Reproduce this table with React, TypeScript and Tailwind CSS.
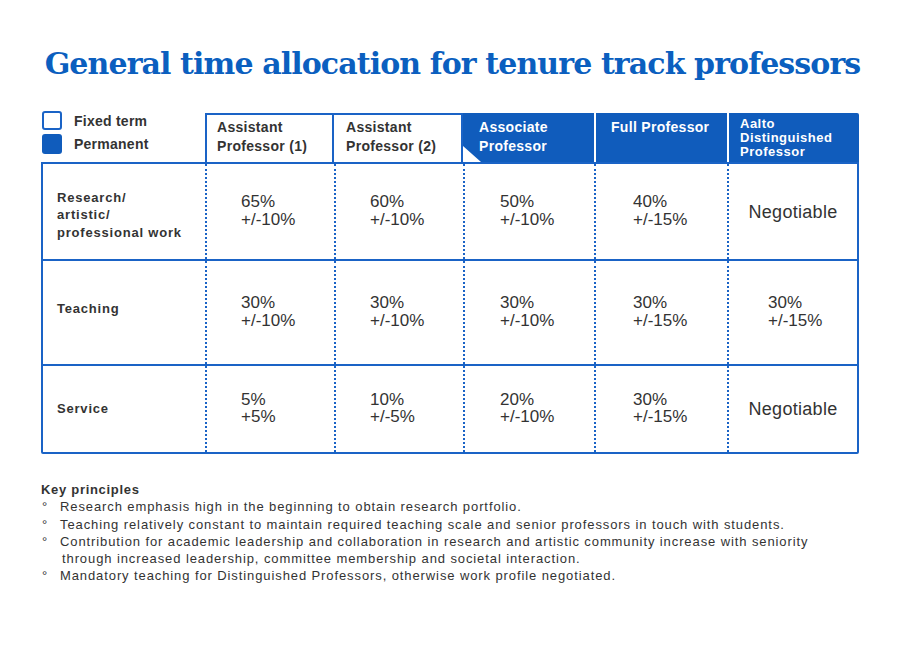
import React from "react";

type Cell = { a?: string; b?: string; neg?: boolean };

const rows: { label: string[]; h: string; labelPad: string; border: boolean; cells: Cell[] }[] = [
  {
    label: ["Research/", "artistic/", "professional work"],
    h: "h-[97px]",
    labelPad: "pt-[7px]",
    border: true,
    cells: [
      { a: "65%", b: "+/-10%" },
      { a: "60%", b: "+/-10%" },
      { a: "50%", b: "+/-10%" },
      { a: "40%", b: "+/-15%" },
      { neg: true },
    ],
  },
  {
    label: ["Teaching"],
    h: "h-[105px]",
    labelPad: "pb-[7px]",
    border: true,
    cells: [
      { a: "30%", b: "+/-10%" },
      { a: "30%", b: "+/-10%" },
      { a: "30%", b: "+/-10%" },
      { a: "30%", b: "+/-15%" },
      { a: "30%", b: "+/-15%" },
    ],
  },
  {
    label: ["Service"],
    h: "h-[86px]",
    labelPad: "",
    border: false,
    cells: [
      { a: "5%", b: "+5%" },
      { a: "10%", b: "+/-5%" },
      { a: "20%", b: "+/-10%" },
      { a: "30%", b: "+/-15%" },
      { neg: true },
    ],
  },
];

const colClasses = [
  "w-[129px] pl-[34px]",
  "w-[129px] pl-[34px]",
  "w-[131px] pl-[35px]",
  "w-[133px] pl-[37px]",
  "w-[130px] pl-[39px]",
];

function DataCell({ cell, idx }: { cell: Cell; idx: number }) {
  if (cell.neg) {
    return (
      <div
        className={`${idx === 4 ? "w-[130px]" : "w-[129px]"} h-full border-l-2 border-dotted border-[#1a63c6] flex items-center justify-center`}
      >
        <span className="text-[18px] leading-[20px] tracking-[0.3px] text-[#333]">Negotiable</span>
      </div>
    );
  }
  return (
    <div className={`${colClasses[idx]} h-full border-l-2 border-dotted border-[#1a63c6] flex items-center pb-[2px]`}>
      <div className="text-[17px] leading-[17.5px] text-[#333]">
        <div>{cell.a}</div>
        <div>{cell.b}</div>
      </div>
    </div>
  );
}

export default function App() {
  return (
    <div className="w-[914px] h-[646px] bg-white relative overflow-hidden pt-[49px] font-['Liberation_Sans',Arial,sans-serif] text-[#333]">
      <h1 className="ml-[41px] w-[823px] text-center whitespace-nowrap text-[30px] leading-[30px] font-bold tracking-[-0.9px] text-[#0b5fbf] font-['DejaVu_Serif',serif]">
        General time allocation for tenure track professors
      </h1>

      <div className="ml-[41px] mt-[32px] w-[818px]">
        {/* header row */}
        <div className="flex h-[51px]">
          <div className="w-[164px] flex flex-col gap-[4px] pl-[1px]">
            <div className="flex items-center h-[19px] gap-[12px]">
              <span className="w-[20px] h-[19px] rounded-[3px] border-2 border-[#1a63c6] box-border" />
              <span className="font-bold text-[14px] leading-[16px] tracking-[0.25px]">Fixed term</span>
            </div>
            <div className="flex items-center h-[20px] gap-[12px]">
              <span className="w-[20px] h-[20px] rounded-[3px] bg-[#105cbc]" />
              <span className="font-bold text-[14px] leading-[16px] tracking-[0.25px]">Permanent</span>
            </div>
          </div>
          <div className="w-[129px] mt-[2px] border-2 border-b-0 border-[#1a63c6] pl-[10px] pt-[3px] font-bold text-[14px] leading-[19px] tracking-[0.3px]">
            <div>Assistant</div>
            <div>Professor (1)</div>
          </div>
          <div className="w-[129px] mt-[2px] border-t-2 border-r-2 border-[#1a63c6] pl-[12px] pt-[3px] font-bold text-[14px] leading-[19px] tracking-[0.3px]">
            <div>Assistant</div>
            <div>Professor (2)</div>
          </div>
          <div className="relative w-[131px] mt-[2px] bg-[#105cbc] pl-[16px] pt-[5px] font-bold text-[14px] leading-[19px] tracking-[0.3px] text-white">
            <div>Associate</div>
            <div>Professor</div>
            <svg className="absolute left-0 bottom-0" width="18" height="16" viewBox="0 0 18 16">
              <polygon points="0,0 0,16 18,16" fill="#ffffff" />
            </svg>
          </div>
          <div className="w-[133px] mt-[2px] bg-[#105cbc] border-l-2 border-white pl-[15px] pt-[5px] font-bold text-[14px] leading-[19px] tracking-[0.3px] text-white">
            <div>Full Professor</div>
          </div>
          <div className="w-[132px] mt-[2px] bg-[#105cbc] border-l-2 border-white rounded-tr-[2px] pl-[11px] pt-[4px] font-bold text-[13px] leading-[14px] tracking-[0.5px] text-white">
            <div>Aalto</div>
            <div>Distinguished</div>
            <div>Professor</div>
          </div>
        </div>

        {/* body */}
        <div className="border-2 border-[#1a63c6] rounded-b-[2px]">
          {rows.map((r, ri) => (
            <div key={ri} className={`flex ${r.h} ${r.border ? "border-b-2 border-[#1a63c6]" : ""}`}>
              <div className={`w-[162px] h-full flex items-center pl-[14px] ${r.labelPad}`}>
                <div className="font-bold text-[13px] leading-[17.3px] tracking-[0.8px]">
                  {r.label.map((l, li) => (
                    <div key={li}>{l}</div>
                  ))}
                </div>
              </div>
              {r.cells.map((c, ci) => (
                <DataCell key={ci} cell={c} idx={ci} />
              ))}
            </div>
          ))}
        </div>
      </div>

      {/* Key principles */}
      <div className="ml-[41px] mt-[27px] text-[13px] leading-[17.3px] text-[#333] whitespace-nowrap">
        <div className="font-bold tracking-[0.7px]">Key principles</div>
        <div className="tracking-[0.9px]">
          <div className="flex">
            <span className="w-[19px] pl-[1px]">°</span>
            <span>Research emphasis high in the beginning to obtain research portfolio.</span>
          </div>
          <div className="flex">
            <span className="w-[19px] pl-[1px]">°</span>
            <span>Teaching relatively constant to maintain required teaching scale and senior professors in touch with students.</span>
          </div>
          <div className="flex">
            <span className="w-[19px] pl-[1px]">°</span>
            <div>
              <div>Contribution for academic leadership and collaboration in research and artistic community increase with seniority</div>
              <div className="pl-[2px]">through increased leadership, committee membership and societal interaction.</div>
            </div>
          </div>
          <div className="flex">
            <span className="w-[19px] pl-[1px]">°</span>
            <span>Mandatory teaching for Distinguished Professors, otherwise work profile negotiated.</span>
          </div>
        </div>
      </div>
    </div>
  );
}
